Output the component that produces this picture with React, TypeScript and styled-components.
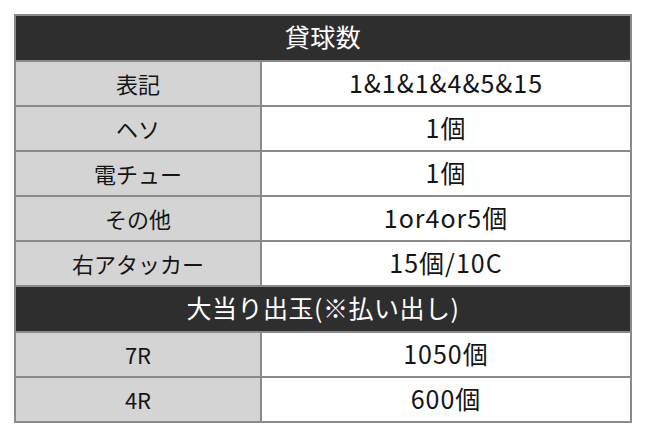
import React from "react";
import styled, { createGlobalStyle } from "styled-components";

const GlobalStyle = createGlobalStyle`
    html, body {
        margin: 0;
        padding: 0;
        background: #ffffff;
    }
    body {
        font-family: "Noto Sans CJK JP", "Noto Sans", sans-serif;
    }
`;

const Page = styled.div`
    padding: 14px 18px 0 14px;
    width: 650px;
    height: 444px;
    box-sizing: border-box;
`;

const Table = styled.table`
    width: 618px;
    border-collapse: collapse;
    border: 2px solid #8a8a8a;
    table-layout: fixed;
`;

const LabelCol = styled.col`
    width: 246px;
`;

const HeadCell = styled.th`
    height: 41px;
    background: #2e2e2e;
    color: #ffffff;
    font-size: 25px;
    font-weight: 400;
    letter-spacing: 0.5px;
    line-height: 1;
    text-align: center;
    padding: 0 0 3px;
    border: 1px solid #8a8a8a;
`;

const LabelCell = styled.td`
    height: 41px;
    background: #d4d4d4;
    color: #151515;
    font-size: 22px;
    line-height: 1;
    text-align: center;
    padding: 0 0 2px;
    border: 2px solid #8a8a8a;
`;

const ValueCell = styled.td`
    height: 41px;
    background: #ffffff;
    color: #151515;
    font-size: 25px;
    letter-spacing: 1px;
    line-height: 1;
    text-align: center;
    padding: 0 0 2px;
    border: 2px solid #8a8a8a;
`;

const sections = [
    {
        title: "貸球数",
        rows: [
            ["表記", "1&1&1&4&5&15"],
            ["ヘソ", "1個"],
            ["電チュー", "1個"],
            ["その他", "1or4or5個"],
            ["右アタッカー", "15個/10C"],
        ],
    },
    {
        title: "大当り出玉(※払い出し)",
        rows: [
            ["7R", "1050個"],
            ["4R", "600個"],
        ],
    },
];

export default function App() {
    return (
        <Page>
            <GlobalStyle />
            <Table>
                <colgroup>
                    <LabelCol />
                    <col />
                </colgroup>
                <tbody>
                    {sections.map((section) => (
                        <React.Fragment key={section.title}>
                            <tr>
                                <HeadCell colSpan={2}>{section.title}</HeadCell>
                            </tr>
                            {section.rows.map(([label, value]) => (
                                <tr key={label}>
                                    <LabelCell>{label}</LabelCell>
                                    <ValueCell>{value}</ValueCell>
                                </tr>
                            ))}
                        </React.Fragment>
                    ))}
                </tbody>
            </Table>
        </Page>
    );
}
